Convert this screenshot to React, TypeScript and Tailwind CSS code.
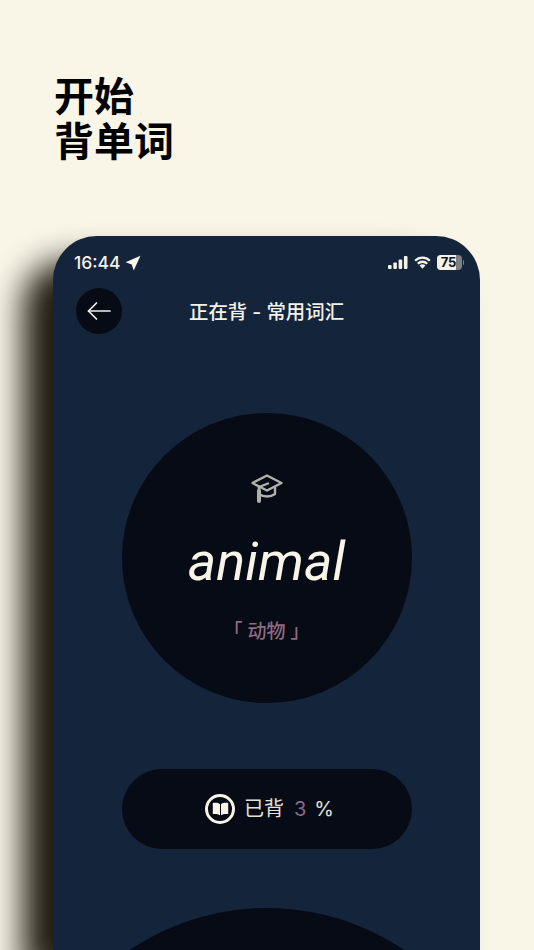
const cjk = "font-['Inter','Noto_Sans_CJK_SC',sans-serif]";

function StatusBar() {
  return (
    <div className="flex h-[52px] items-center justify-between pl-[21px] pr-[16px] pt-[1px]">
      <div className="flex items-center gap-[4px]">
        <span className="font-['Inter',sans-serif] text-[17.5px] font-medium leading-none text-[#f4f2e8]">16:44</span>
        <svg width="16" height="16" viewBox="0 0 15 15">
          <path d="M14.500.8.500 6.800l5.800 2 1.900 5.700z" fill="#f8f6ec" />
        </svg>
      </div>
      <div className="flex items-center gap-[6px]">
        <svg width="20" height="13" viewBox="0 0 20 13" fill="#f4f2e8">
          <rect x="0" y="9" width="3.600" height="4" rx="1" />
          <rect x="5.300" y="6.500" width="3.600" height="6.500" rx="1" />
          <rect x="10.600" y="3.500" width="3.600" height="9.500" rx="1" />
          <rect x="15.900" y="0" width="3.600" height="13" rx="1" />
        </svg>
        <svg width="17" height="13" viewBox="0 0 18 13" fill="none" stroke="#f4f2e8" strokeWidth="2.400">
          <path d="M1.200 4.600a11 11 0 0 1 15.600 0" />
          <path d="M4 7.800a7 7 0 0 1 10 0" />
          <path d="M9 13 5.900 9.800a4.400 4.400 0 0 1 6.200 0z" fill="#f4f2e8" stroke="none" />
        </svg>
        <div className="flex items-center gap-[1px]">
          <div className="flex h-[15px] w-[25px] items-center overflow-hidden rounded-[4px] bg-[#7d7f80]">
            <div className="flex h-full w-[19px] items-center justify-center bg-[#f4f2e8]">
              <span className="pl-[5px] font-['Inter',sans-serif] text-[13px] font-bold leading-none text-[#0c1524]">75</span>
            </div>
          </div>
          <div className="h-[5px] w-[1.500px] rounded-r-full bg-[#7d7f80]" />
        </div>
      </div>
    </div>
  );
}

function BackArrow() {
  return (
    <svg width="24" height="20" viewBox="0 0 24 20" fill="none" stroke="#f4f2e8" strokeWidth="1.700" strokeLinecap="round" strokeLinejoin="round">
      <path d="M23 10H1.500" />
      <path d="M9.500 2 1.500 10l8 8" />
    </svg>
  );
}

function CapIcon() {
  return (
    <svg width="32" height="30" viewBox="0 0 32 30" fill="none" stroke="#b1b1ac" strokeWidth="2.400" strokeLinejoin="round" strokeLinecap="round">
      <path d="M16 1.500 30.500 9 16 16.500 1.500 9z" />
      <path d="M8 13v7c2.500 1.800 5 2.500 8 2.500s5.500-.7 8-2.500v-7" />
      <path d="M17 9.500 8 13v4" />
      <path d="M8 17v10" strokeWidth="4" />
    </svg>
  );
}

function BookIcon() {
  return (
    <div className="flex h-[30px] w-[30px] items-center justify-center rounded-full border-[3px] border-[#f8f5e8]">
      <svg width="17" height="14" viewBox="0 0 17 14" fill="#f8f5e8">
        <path d="M8 2.200C6.500 1 4 .6.800 1v11c3-.3 5.500 0 7.200 1.200z" />
        <path d="M9 2.200C10.500 1 13 .6 16.200 1v11c-3-.3-5.500 0-7.200 1.200z" />
      </svg>
    </div>
  );
}

export default function App() {
  return (
    <div className={`h-[950px] w-[534px] overflow-hidden bg-[#f9f6e8] ${cjk}`}>
      <h1 className="pl-[54px] pt-[74px] text-[40px] font-semibold leading-[45px] text-black">
        开始
        <br />
        背单词
      </h1>

      <div className="ml-[53px] mt-[72px] flex h-[714px] w-[427px] flex-col items-center overflow-hidden rounded-t-[44px] bg-[#14243a] shadow-[-30px_25px_32px_rgba(20,15,5,0.95)]">
        <div className="w-full">
          <StatusBar />
          <div className="flex h-[46px] items-center pl-[23px]">
            <div className="flex h-[46px] w-[46px] items-center justify-center rounded-full bg-[#060b15]">
              <BackArrow />
            </div>
            <span className="ml-[67px] mt-[3px] text-[19.400px] font-medium leading-none text-[#f4f2e8]">正在背 - 常用词汇</span>
          </div>
        </div>

        <div className="mt-[79px] flex h-[290px] w-[290px] shrink-0 flex-col items-center rounded-full bg-[#060b15]">
          <div className="mt-[61px]">
            <CapIcon />
          </div>
          <div className="mt-[25px] font-['Roboto',sans-serif] text-[54px] font-normal italic leading-[66px] text-[#f8f5e8]">animal</div>
          <div className="mt-[23px] text-[19px] font-medium leading-[28px] text-[#8f6a80]">「 动物 」</div>
        </div>

        <div className="mt-[66px] flex h-[80px] w-[290px] shrink-0 items-center justify-center rounded-full bg-[#060b15] pl-[6px]">
          <BookIcon />
          <span className="ml-[9px] text-[20px] leading-none text-[#e4e2d8]">已背</span>
          <span className="ml-[10px] font-['Inter',sans-serif] text-[20px] leading-none text-[#8f6a80]">3</span>
          <span className="ml-[8px] font-['Inter',sans-serif] text-[20px] leading-none text-[#e4e2d8]">%</span>
        </div>

        <div className="mt-[59px] h-[490px] w-[490px] shrink-0 rounded-full bg-[#060b15]" />
      </div>
    </div>
  );
}
